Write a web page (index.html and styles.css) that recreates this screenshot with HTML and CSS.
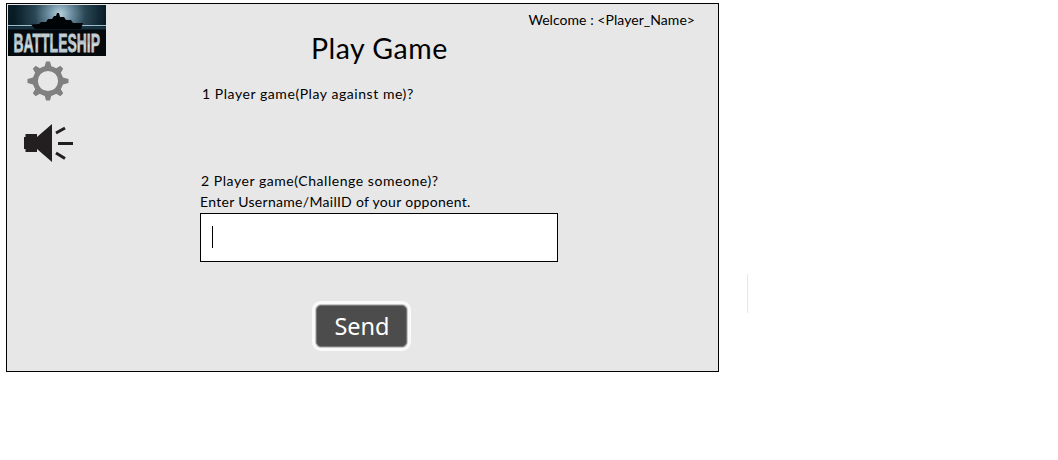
FILE: index.html
```html
<!DOCTYPE html>
<html lang="en">
<head>
<meta charset="utf-8">
<title>Play Game</title>
<link rel="stylesheet" href="styles.css">
</head>
<body>
<div class="page">
  <div class="window">
    <aside class="sidebar">
      <svg class="logo" viewBox="0 0 98 51" role="img" aria-label="Battleship">
        <defs>
          <radialGradient id="glow" gradientUnits="userSpaceOnUse" cx="52" cy="9" r="46">
            <stop offset="0" stop-color="#b8d2de"/>
            <stop offset=".22" stop-color="#7597a9"/>
            <stop offset=".55" stop-color="#2a4654"/>
            <stop offset="1" stop-color="#081c26"/>
          </radialGradient>
          <linearGradient id="steel" x1="0" y1="0" x2="0" y2="1">
            <stop offset="0" stop-color="#eef3f5"/>
            <stop offset=".45" stop-color="#a9b8bf"/>
            <stop offset=".6" stop-color="#dce4e8"/>
            <stop offset="1" stop-color="#94a5ae"/>
          </linearGradient>
        </defs>
        <rect width="98" height="51" fill="#03090d"/>
        <rect width="98" height="22" fill="url(#glow)"/>
        <path d="M0 20.500H98" stroke="#9dbccb" stroke-width="1"/>
        <path d="M0 23H98" stroke="#17313f" stroke-width="3"/>
        <path d="M23 19.500L31 19L33 17H38L40 14H44L46 11H48L49 8H51L52 12H56L58 15H63L65 18H75L73 24H27Z" fill="#010407"/>
        <text class="logo-text" transform="translate(5.5 46.500) scale(.66 1)" textLength="131" lengthAdjust="spacingAndGlyphs" fill="url(#steel)">BATTLESHIP</text>
      </svg>
      <svg class="gear" viewBox="0 0 42 40" fill="#808080">
        <defs><path id="tooth" d="M14 8.500L17.500 6L19 .5H23L24.500 6L28 8.500Z"/></defs>
        <circle cx="21" cy="20" r="12.600" fill="none" stroke="#808080" stroke-width="5"/>
        <use href="#tooth"/>
        <use href="#tooth" transform="rotate(45 21 20)"/>
        <use href="#tooth" transform="translate(1 0) rotate(90 21 20)"/>
        <use href="#tooth" transform="rotate(135 21 20)"/>
        <use href="#tooth" transform="rotate(180 21 20)"/>
        <use href="#tooth" transform="rotate(225 21 20)"/>
        <use href="#tooth" transform="translate(-1 0) rotate(270 21 20)"/>
        <use href="#tooth" transform="rotate(315 21 20)"/>
      </svg>
      <svg class="speaker" viewBox="0 0 50 40" fill="#231f20">
        <path d="M1.500 10H13V13L28 0V38L13 25V28H1.500V25H0V13H1.500Z"/>
        <path d="M32 9L41 4M34 19.500H49M32 29L41 34.500" fill="none" stroke="#231f20" stroke-width="3"/>
      </svg>
    </aside>
    <main class="main">
      <p class="welcome">Welcome : &lt;Player_Name&gt;</p>
      <h1 class="title">Play Game</h1>
      <p class="line one">1 Player game(Play against me)?</p>
      <p class="line two">2 Player game(Challenge someone)?</p>
      <p class="line enter">Enter Username/MailID of your opponent.</p>
      <div class="field"><span class="caret"></span></div>
      <button class="send">Send</button>
    </main>
  </div>
  <div class="tick"></div>
</div>
</body>
</html>
```
FILE: styles.css
```css
body { margin: 0; background: #fff; color: #000; font-family: Lato, "Liberation Sans", sans-serif; }
.page { display: flex; padding: 3px 0 0 6px; }
.window { box-sizing: border-box; width: 713px; height: 369px; border: 1px solid #000; background: #e7e7e7; display: flex; }
.sidebar { width: 100px; padding: 1px 0 0 1px; box-sizing: border-box; display: flex; flex-direction: column; align-items: flex-start; }
.logo { width: 98px; height: 51px; display: block; overflow: visible; }
.logo-text { font: bold 26px "Liberation Sans", sans-serif; stroke: #b8c6cd; stroke-width: .8px; }
.gear { width: 42px; height: 40px; margin: 5px 0 0 19px; overflow: visible; }
.speaker { width: 50px; height: 40px; margin: 23px 0 0 16px; }
.main { flex: 1; display: flex; flex-direction: column; align-items: flex-start; padding-top: 6px; }
.welcome { margin: 0 23px 0 0; align-self: flex-end; font-size: 14px; line-height: 20px; letter-spacing: .05px; white-space: nowrap; }
.title { margin: 0 0 0 204px; font-size: 28.5px; font-weight: 400; letter-spacing: .5px; line-height: 36px; white-space: nowrap; }
.line { margin: 0 0 0 93px; font-size: 14px; line-height: 20px; white-space: nowrap; }
.one { margin: 18px 0 0 95px; letter-spacing: .56px; }
.two { margin: 67px 0 0 94px; letter-spacing: .55px; }
.enter { margin-top: 1px; letter-spacing: .3px; }
.field { box-sizing: border-box; width: 358px; height: 49px; margin: 1px 0 0 93px; border: 1px solid #000; background: #fff; display: flex; padding: 12px 0 0 11px; }
.caret { width: 1px; height: 22px; background: #000; }
.send { box-sizing: border-box; width: 91px; height: 42px; margin: 43px 0 0 209px; padding: 0 0 0 1px; border: 1px solid #777; border-radius: 5px; background: #4c4c4c; color: #fff; box-shadow: 0 0 0 1px #c8c8c8, 0 0 0 4px #fafafa; font: 23.5px/38px "Noto Sans", sans-serif; }
.tick { width: 1px; height: 39px; margin: 271px 0 0 28px; background: #e7e7e7; }
```
